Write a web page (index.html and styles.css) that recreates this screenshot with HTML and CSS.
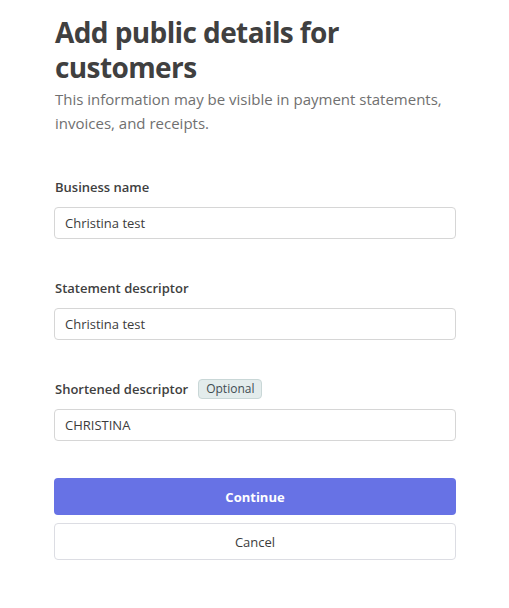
FILE: index.html
```html
<!DOCTYPE html>
<html lang="en">
<head>
    <meta charset="UTF-8">
    <meta name="viewport" content="width=device-width, initial-scale=1.0">
    <title>Add public details for customers</title>
    <link rel="stylesheet" href="styles.css">
</head>
<body>

    <div class="panel">
        <h1>Add public details for customers</h1>
        <p class="intro">This information may be visible in payment statements, invoices, and receipts.</p>

        <div class="field">
            <label for="business-name">Business name</label>
            <input type="text" id="business-name" value="Christina test">
        </div>

        <div class="field">
            <label for="statement-descriptor">Statement descriptor</label>
            <input type="text" id="statement-descriptor" value="Christina test">
        </div>

        <div class="field">
            <label for="short-descriptor">Shortened descriptor <span class="badge">Optional</span></label>
            <input type="text" id="short-descriptor" value="CHRISTINA">
        </div>

        <div class="actions">
            <button class="primary">Continue</button>
            <button class="secondary">Cancel</button>
        </div>
    </div>

</body>
</html>
```

FILE: styles.css
```css
body {
    font-family: "Open Sans", "Noto Sans", Arial, sans-serif;
    margin: 0;
    background: #fff;
    color: #3c4043;
}
.panel {
    width: 402px;
    padding: 15px 0 0 54px;
}
h1 {
    font-size: 28px;
    line-height: 35px;
    font-weight: 700;
    color: #404040;
    margin: 0 0 0 1px;
    letter-spacing: -0.6px;
}
.intro {
    font-size: 15px;
    line-height: 24px;
    color: #707070;
    margin: 2px 0 0 1px;
}
.field {
    margin-top: 38px;
}
.field:first-of-type {
    margin-top: 41px;
}
label {
    display: flex;
    align-items: center;
    gap: 10px;
    height: 22px;
    font-size: 13px;
    font-weight: 600;
    color: #404040;
    margin: 0 0 9px 1px;
}
.badge {
    font-size: 12px;
    font-weight: 400;
    color: #3f4d52;
    background: #e3ecec;
    border: 1px solid #c9d7d7;
    border-radius: 4px;
    padding: 0 7px;
    line-height: 18px;
}
input {
    box-sizing: border-box;
    width: 402px;
    height: 32px;
    border: 1px solid #d6d6d6;
    border-radius: 4px;
    padding: 0 10px;
    font-family: inherit;
    font-size: 13px;
    color: #3c3c3c;
    background: #fff;
}
.actions {
    display: flex;
    flex-direction: column;
    gap: 8px;
    margin-top: 37px;
}
button {
    box-sizing: border-box;
    width: 402px;
    height: 37px;
    border-radius: 4px;
    font-family: inherit;
    font-size: 13px;
}
.primary {
    background: #6772e5;
    border: 0;
    color: #fff;
    font-weight: 700;
}
.secondary {
    background: #fff;
    border: 1px solid #dcdde3;
    color: #3c3c3c;
    font-weight: 500;
}
```
